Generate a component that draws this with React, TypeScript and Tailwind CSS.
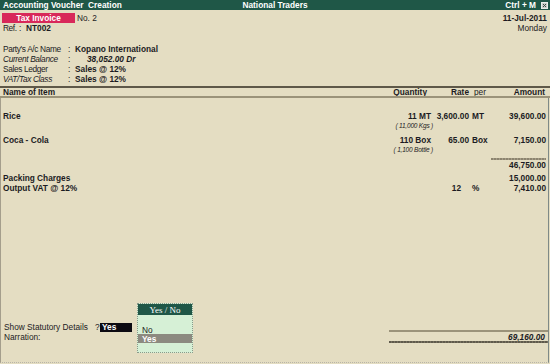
// Tally-style Accounting Voucher Creation screen

const ink = 'text-[#1b1b22]';

function InfoRow({ label, value, italic = false, valueClass = '' }: { label: string; value: string; italic?: boolean; valueClass?: string }) {
  return (
    <div className="flex h-[10px] items-center">
      <span className={`w-[65px] tracking-[-0.35px] ${italic ? 'italic' : ''}`}>{label}</span>
      <span className="w-[7px]">:</span>
      <span className={`font-bold ${valueClass}`}>{value}</span>
    </div>
  );
}

function ItemRow({ name, qty, rate, per, amount, rateClass = '' }: { name?: string; qty?: string; rate?: string; per?: string; amount?: string; rateClass?: string }) {
  return (
    <div className="grid h-[10px] grid-cols-[1fr_70px_41px_18px_56px] items-center font-bold">
      <span>{name}</span>
      <span className="text-right">{qty}</span>
      <span className={`pr-[3px] text-right ${rateClass}`}>{rate}</span>
      <span>{per}</span>
      <span className="text-right">{amount}</span>
    </div>
  );
}

function SubRow({ text }: { text: string }) {
  return (
    <div className="grid h-[9px] grid-cols-[1fr_72px_41px_18px_54px] items-center">
      <span />
      <span className="text-right text-[6.5px] italic tracking-[-0.2px]">{text}</span>
    </div>
  );
}

export default function App() {
  return (
    <div className={`relative flex h-[364px] w-[550px] flex-col overflow-hidden bg-[#e4ddc2] text-[8.3px] leading-[10px] ${ink} font-['Liberation_Sans',Arial,sans-serif]`}>
      {/* Title bar */}
      <div className="flex h-[10px] items-center bg-[#1f5747] px-[3px] font-bold text-white">
        <span className="flex-1">Accounting Voucher&nbsp; Creation</span>
        <span>National Traders</span>
        <div className="flex flex-1 items-center justify-end gap-[5px]">
          <span>Ctrl + M</span>
          <svg width="7" height="7" viewBox="0 0 7 7" className="mr-[-1px]">
            <rect x="0.5" y="0.5" width="6" height="6" fill="#c9cfc9" stroke="#e8ece8" />
            <path d="M2 2 L5 5 M5 2 L2 5" stroke="#3b4a44" strokeWidth="1" />
          </svg>
        </div>
      </div>

      {/* Voucher header */}
      <div className="flex h-[76px] justify-between pl-[2px] pr-[3px] pt-[3px]">
        <div className="flex flex-col">
          <div className="flex h-[10px] items-center">
            <div className="flex h-[10px] w-[73px] items-center justify-center bg-[#d8285a] font-bold text-white">Tax Invoice</div>
            <span className="ml-[2px]">No. 2</span>
          </div>
          <div className="flex h-[10px] items-center pl-[1px]">
            <span className="w-[16px] tracking-[-0.4px]">Ref.</span>
            <span className="w-[7px]">:</span>
            <span className="font-bold">NT002</span>
          </div>
          <div className="mt-[11px] flex flex-col pl-[1px]">
            <InfoRow label="Party's A/c Name" value="Kopano International" />
            <InfoRow label="Current Balance" value="38,052.00 Dr" italic valueClass="italic pl-[12px]" />
            <InfoRow label="Sales Ledger" value="Sales @ 12%" />
            <InfoRow label="VAT/Tax Class" value="Sales @ 12%" italic />
          </div>
        </div>
        <div className="flex flex-col items-end">
          <span className="h-[10px] font-bold">11-Jul-2011</span>
          <span className="h-[10px]">Monday</span>
        </div>
      </div>

      <div className="h-[2px] bg-[#5e5848]" />
      {/* Column headings */}
      <div className="grid h-[8px] grid-cols-[1fr_67px_42px_20px_56px] items-center pl-[3px] pr-[5px] font-bold leading-[8px]">
        <span>Name of Item</span>
        <span className="text-right">Quantity</span>
        <span className="text-right">Rate</span>
        <span className="pl-[5px] font-normal">per</span>
        <span className="text-right">Amount</span>
      </div>
      <div className="h-[2px] bg-[#9b937a]" />

      {/* Items */}
      <div className="mb-[1px] mr-[1px] flex flex-1 flex-col border-b border-l border-r border-dotted border-b-[#b9b5a8] border-l-[#a49e8c] border-r-[#7f8a86] pl-[2px] pr-[2px] [border-left-style:solid] [border-right-style:solid]">
        <div className="h-[13px]" />
        <ItemRow name="Rice" qty="11 MT" rate="3,600.00" per="MT" amount="39,600.00" />
        <SubRow text="( 11,000 Kgs )" />
        <div className="h-[5px]" />
        <ItemRow name="Coca - Cola" qty="110 Box" rate="65.00" per="Box" amount="7,150.00" />
        <SubRow text="( 1,100 Bottle )" />
        <div className="h-[4px]" />
        <div className="flex justify-end">
          <div className="h-[2px] w-[55px] bg-[repeating-linear-gradient(90deg,#8c846f_0_2px,#a59d88_2px_3px)]" />
        </div>
        <ItemRow amount="46,750.00" />
        <div className="h-[3px]" />
        <ItemRow name="Packing Charges" amount="15,000.00" />
        <ItemRow name="Output VAT @ 12%" rate="12" per="%" amount="7,410.00" rateClass="pr-[11px]" />

        <div className="flex-1" />

        {/* Footer */}
        <div className="flex items-start pb-[19px]">
          <div className="flex flex-1 flex-col pl-[1px]">
            <div className="flex h-[10px] items-center">
              <span className="w-[91px]">Show Statutory Details</span>
              <span className="w-[5px]">?</span>
              <span className="flex h-[9px] w-[32px] items-center bg-[#0c0a12] pl-[2px] font-bold text-white">Yes</span>
            </div>
            <div className="flex h-[9px] items-center">Narration:</div>
          </div>
          <div className="mr-[-2px] flex w-[159px] flex-col pt-[8px]">
            <div className="h-[2px] bg-[#9b937a]" />
            <div className="flex h-[9px] items-center justify-end pr-[3px] font-bold italic">69,160.00</div>
            <div className="h-[2px] bg-[repeating-linear-gradient(90deg,#5f5a4c_0_2px,#77715f_2px_3px)]" />
          </div>
        </div>
      </div>

      {/* Yes / No popup */}
      <div className="absolute left-[137px] top-[303px] flex h-[50px] w-[56px] flex-col border border-dotted border-[#8a9a8a] bg-[#d6f0d6]">
        <div className="flex h-[11px] items-center justify-center bg-[#1f5747] font-['Liberation_Serif',serif] text-[9px] text-white">Yes / No</div>
        <div className="h-[10px]" />
        <div className="flex h-[9px] items-center pl-[4px]">No</div>
        <div className="flex h-[9px] items-center bg-[#8c8a80] pl-[4px] font-bold text-white">Yes</div>
      </div>
    </div>
  );
}
